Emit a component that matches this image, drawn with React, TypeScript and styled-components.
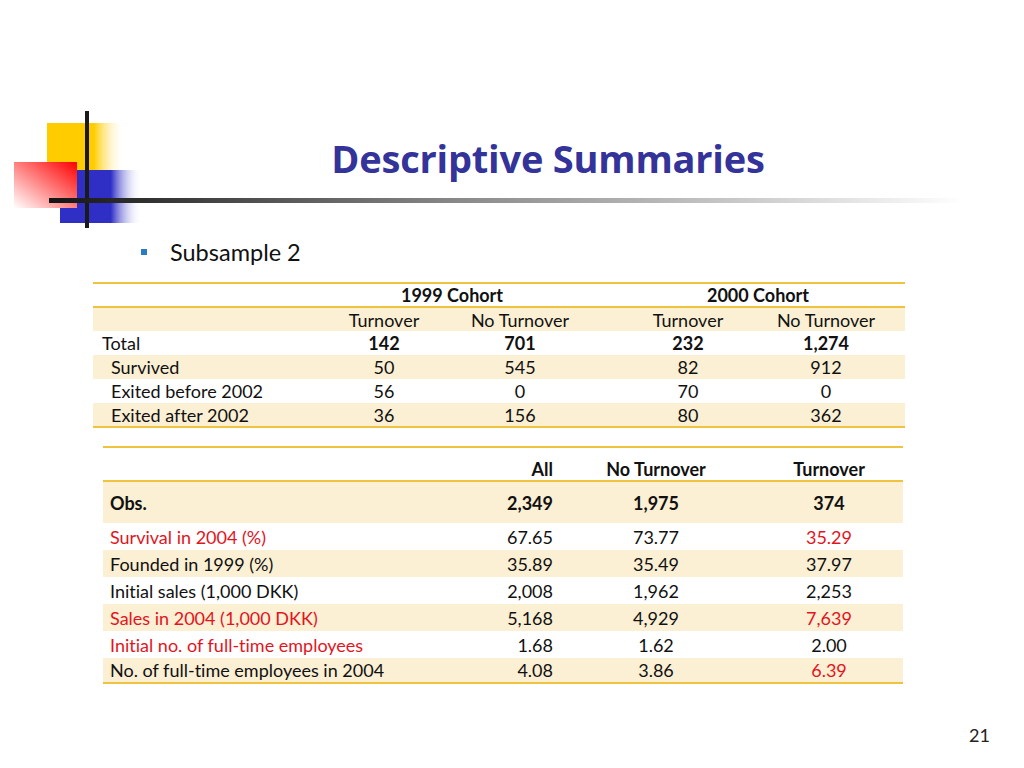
import React from "react";
import styled, { createGlobalStyle } from "styled-components";

const Global = createGlobalStyle`
  html, body { margin: 0; padding: 0; background: #ffffff; }
  body {
    font-family: Lato, "Open Sans", sans-serif;
    color: #111;
    font-variant-ligatures: none;
    font-feature-settings: "liga" 0, "clig" 0;
  }
`;

const Slide = styled.div`
  position: relative;
  width: 1024px;
  height: 768px;
  overflow: hidden;
  background: #fff;
`;

const Header = styled.div`
  position: relative;
  height: 225px;
`;

const TitleBar = styled.div`
  box-sizing: border-box;
  height: 198px;
  padding: 133px 0 0 72px;
  text-align: center;
`;

const Title = styled.h1`
  margin: 0;
  font-family: "Open Sans", Lato, sans-serif;
  font-weight: 700;
  font-size: 38px;
  line-height: 50px;
  color: #333399;
  letter-spacing: -0.2px;
`;

const Rule = styled.div`
  position: relative;
  z-index: 1;
  margin-left: 49px;
  width: 915px;
  height: 5px;
  background: linear-gradient(to right, #141414 0%, #4a4a4a 20%, #8a8a8a 45%, #c8c8c8 75%, rgba(255,255,255,0) 100%);
`;

const Logo = styled.svg`
  position: absolute;
  left: 0;
  top: 100px;
`;

const Content = styled.div`
  padding-top: 13px;
`;

const Bullet = styled.div`
  display: flex;
  align-items: center;
  margin-left: 141px;
  gap: 23px;
  font-size: 23.5px;
  color: #111;
  height: 28px;
`;

const BulletMark = styled.span`
  width: 6px;
  height: 6px;
  background: #2d7bc4;
  display: inline-block;
`;

const Table1 = styled.div`
  margin: 16px 0 0 93px;
  width: 812px;
  display: grid;
  grid-template-columns: 223px 136px 136px 32px 136px 140px 9px;
  border-top: 2px solid #efc23f;
  border-bottom: 2px solid #efc23f;
  font-size: 18px;
`;

const Row1 = styled.div<{ $tan?: boolean; $h: number; $line?: boolean }>`
  grid-column: 1 / -1;
  display: grid;
  grid-template-columns: subgrid;
  height: ${(p) => p.$h}px;
  align-items: center;
  background: ${(p) => (p.$tan ? "#fbefd4" : "transparent")};
  border-bottom: ${(p) => (p.$line ? "2px solid #efc23f" : "none")};
  box-sizing: border-box;
`;

const Cell = styled.div<{ $span?: number; $col?: number; $bold?: boolean; $indent?: number; $align?: string; $red?: boolean }>`
  grid-column: ${(p) => (p.$col ? `${p.$col} / span ${p.$span || 1}` : "auto")};
  text-align: ${(p) => p.$align || "center"};
  font-weight: ${(p) => (p.$bold ? 700 : 400)};
  padding-left: ${(p) => p.$indent || 0}px;
  color: ${(p) => (p.$red ? "#e3141e" : "#111")};
  white-space: nowrap;
`;

const Table2 = styled.div`
  margin: 18px 0 0 103px;
  width: 800px;
  display: grid;
  grid-template-columns: 330px 120px 30px 146px 30px 140px 4px;
  border-top: 2px solid #efc23f;
  border-bottom: 2px solid #efc23f;
  font-size: 18px;
`;

const Row2 = styled.div<{ $tan?: boolean; $h: number; $line?: boolean; $end?: boolean }>`
  grid-column: 1 / -1;
  display: grid;
  grid-template-columns: subgrid;
  height: ${(p) => p.$h}px;
  align-items: ${(p) => (p.$end ? "end" : "center")};
  background: ${(p) => (p.$tan ? "#fbefd4" : "transparent")};
  border-bottom: ${(p) => (p.$line ? "2px solid #efc23f" : "none")};
  box-sizing: border-box;
`;

const PageNum = styled.div`
  position: absolute;
  right: 34px;
  bottom: 22px;
  font-size: 18px;
  color: #222;
`;

type R = { label: string; vals: string[]; red?: boolean[]; labelRed?: boolean };

const rows2: R[] = [
  { label: "Survival in 2004 (%)", vals: ["67.65", "73.77", "35.29"], labelRed: true, red: [false, false, true] },
  { label: "Founded in 1999 (%)", vals: ["35.89", "35.49", "37.97"] },
  { label: "Initial sales (1,000 DKK)", vals: ["2,008", "1,962", "2,253"] },
  { label: "Sales in 2004 (1,000 DKK)", vals: ["5,168", "4,929", "7,639"], labelRed: true, red: [false, false, true] },
  { label: "Initial no. of full-time employees", vals: ["1.68", "1.62", "2.00"], labelRed: true },
  { label: "No. of full-time employees in 2004", vals: ["4.08", "3.86", "6.39"], red: [false, false, true] },
];

const rows1 = [
  { label: "Survived", vals: ["50", "545", "82", "912"], tan: true, h: 24 },
  { label: "Exited before 2002", vals: ["56", "0", "70", "0"], tan: false, h: 24 },
  { label: "Exited after 2002", vals: ["36", "156", "80", "362"], tan: true, h: 23 },
];

export default function App() {
  return (
    <Slide>
      <Global />
      <Header>
        <Logo width="160" height="140" viewBox="0 0 160 140">
          <defs>
            <linearGradient id="yel" x1="0" y1="0" x2="1" y2="0">
              <stop offset="0" stopColor="#ffcc00" />
              <stop offset="0.6" stopColor="#ffcc00" />
              <stop offset="1" stopColor="#ffffff" stopOpacity="0" />
            </linearGradient>
            <linearGradient id="blu" x1="0" y1="0" x2="1" y2="0">
              <stop offset="0" stopColor="#2f2fc6" />
              <stop offset="0.62" stopColor="#2f2fc6" />
              <stop offset="1" stopColor="#ffffff" stopOpacity="0" />
            </linearGradient>
            <linearGradient id="red" x1="1" y1="0" x2="0" y2="1">
              <stop offset="0" stopColor="#ff0000" />
              <stop offset="1" stopColor="#ffffff" />
            </linearGradient>
          </defs>
          <rect x="47" y="23" width="78" height="47" fill="url(#yel)" />
          <rect x="60" y="70" width="82" height="53" fill="url(#blu)" />
          <rect x="14" y="62" width="63" height="46" fill="url(#red)" />
          <rect x="85" y="11" width="4" height="117" fill="#1a1a1a" />
        </Logo>
        <TitleBar>
          <Title>Descriptive Summaries</Title>
        </TitleBar>
        <Rule />
      </Header>
      <Content>
        <Bullet>
          <BulletMark />
          <span>Subsample 2</span>
        </Bullet>
        <Table1>
          <Row1 $h={24} $line>
            <Cell $col={2} $span={2} $bold>1999 Cohort</Cell>
            <Cell $col={5} $span={2} $bold>2000 Cohort</Cell>
          </Row1>
          <Row1 $h={23} $tan>
            <Cell $col={2}>Turnover</Cell>
            <Cell $col={3}>No Turnover</Cell>
            <Cell $col={5}>Turnover</Cell>
            <Cell $col={6}>No Turnover</Cell>
          </Row1>
          <Row1 $h={24}>
            <Cell $col={1} $align="left" $indent={9}>Total</Cell>
            <Cell $col={2} $bold>142</Cell>
            <Cell $col={3} $bold>701</Cell>
            <Cell $col={5} $bold>232</Cell>
            <Cell $col={6} $bold>1,274</Cell>
          </Row1>
          {rows1.map((r) => (
            <Row1 key={r.label} $h={r.h} $tan={r.tan}>
              <Cell $col={1} $align="left" $indent={18}>{r.label}</Cell>
              <Cell $col={2}>{r.vals[0]}</Cell>
              <Cell $col={3}>{r.vals[1]}</Cell>
              <Cell $col={5}>{r.vals[2]}</Cell>
              <Cell $col={6}>{r.vals[3]}</Cell>
            </Row1>
          ))}
        </Table1>
        <Table2>
          <Row2 $h={34} $line $end>
            <Cell $col={2} $align="right" $bold>All</Cell>
            <Cell $col={4} $bold>No Turnover</Cell>
            <Cell $col={6} $bold>Turnover</Cell>
          </Row2>
          <Row2 $h={41} $tan>
            <Cell $col={1} $align="left" $indent={7} $bold>Obs.</Cell>
            <Cell $col={2} $align="right" $bold>2,349</Cell>
            <Cell $col={4} $bold>1,975</Cell>
            <Cell $col={6} $bold>374</Cell>
          </Row2>
          {rows2.map((r, i) => (
            <Row2 key={r.label} $h={i === 5 ? 24 : 27} $tan={i % 2 === 1}>
              <Cell $col={1} $align="left" $indent={7} $red={r.labelRed}>{r.label}</Cell>
              <Cell $col={2} $align="right" $red={r.red?.[0]}>{r.vals[0]}</Cell>
              <Cell $col={4} $red={r.red?.[1]}>{r.vals[1]}</Cell>
              <Cell $col={6} $red={r.red?.[2]}>{r.vals[2]}</Cell>
            </Row2>
          ))}
        </Table2>
      </Content>
      <PageNum>21</PageNum>
    </Slide>
  );
}
